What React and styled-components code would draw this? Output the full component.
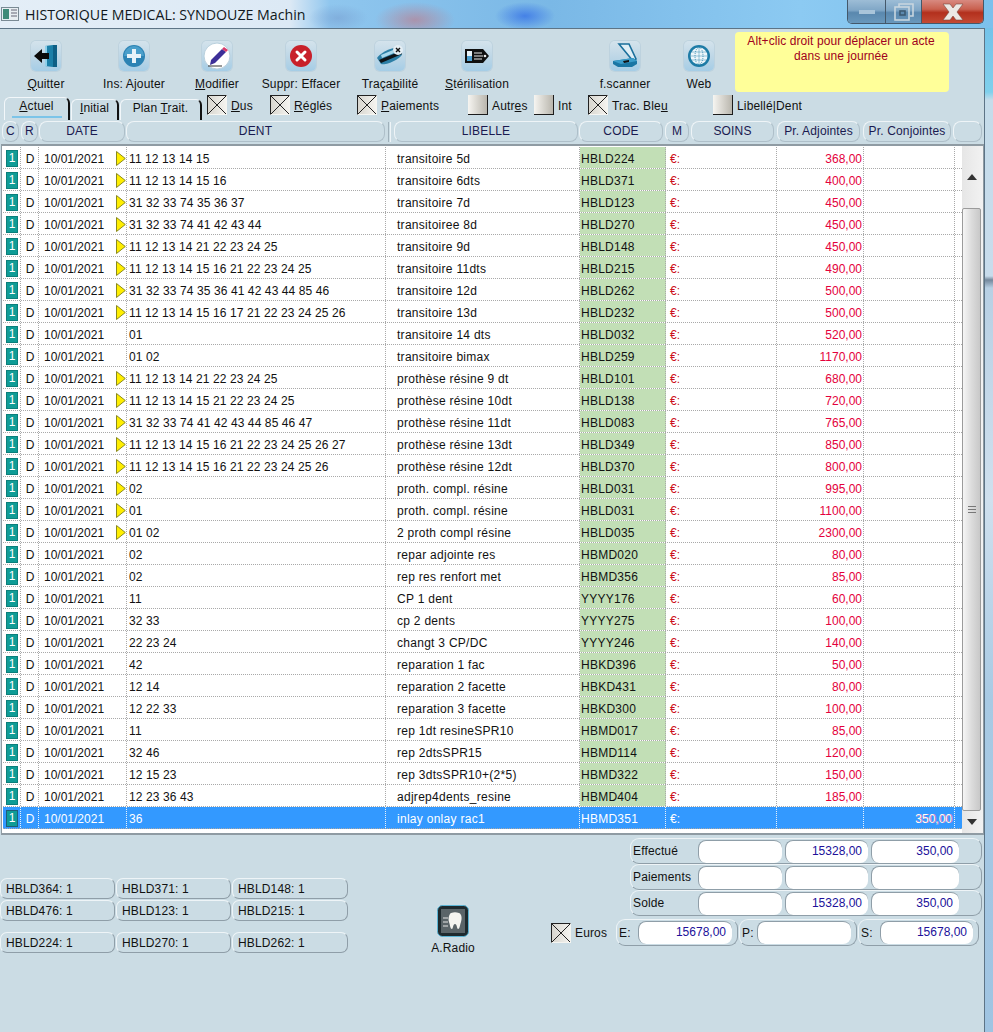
import React from "react";
import styled, { createGlobalStyle } from "styled-components";

const rows = [
  ["11 12 13 14 15", "transitoire 5d", "HBLD224", "368,00", 1],
  ["11 12 13 14 15 16", "transitoire 6dts", "HBLD371", "400,00", 1],
  ["31 32 33 74 35 36 37", "transitoire 7d", "HBLD123", "450,00", 1],
  ["31 32 33 74 41 42 43 44", "transitoiree 8d", "HBLD270", "450,00", 1],
  ["11 12 13 14 21 22 23 24 25", "transitoire 9d", "HBLD148", "450,00", 1],
  ["11 12 13 14 15 16 21 22 23 24 25", "transitoire 11dts", "HBLD215", "490,00", 1],
  ["31 32 33 74 35 36 41 42 43 44 85 46", "transitoire 12d", "HBLD262", "500,00", 1],
  ["11 12 13 14 15 16 17 21 22 23 24 25 26", "transitoire 13d", "HBLD232", "500,00", 1],
  ["01", "transitoire 14 dts", "HBLD032", "520,00", 0],
  ["01 02", "transitoire bimax", "HBLD259", "1170,00", 0],
  ["11 12 13 14 21 22 23 24 25", "prothèse résine 9 dt", "HBLD101", "680,00", 1],
  ["11 12 13 14 15 21 22 23 24 25", "prothèse résine 10dt", "HBLD138", "720,00", 1],
  ["31 32 33 74 41 42 43 44 85 46 47", "prothèse résine 11dt", "HBLD083", "765,00", 1],
  ["11 12 13 14 15 16 21 22 23 24 25 26 27", "prothèse résine 13dt", "HBLD349", "850,00", 1],
  ["11 12 13 14 15 16 21 22 23 24 25 26", "prothèse résine 12dt", "HBLD370", "800,00", 1],
  ["02", "proth. compl. résine", "HBLD031", "995,00", 1],
  ["01", "proth. compl. résine", "HBLD031", "1100,00", 1],
  ["01 02", "2 proth compl résine", "HBLD035", "2300,00", 1],
  ["02", "repar adjointe res", "HBMD020", "80,00", 0],
  ["02", "rep res renfort met", "HBMD356", "85,00", 0],
  ["11", "CP 1 dent", "YYYY176", "60,00", 0],
  ["32 33", "cp 2 dents", "YYYY275", "100,00", 0],
  ["22 23 24", "changt 3 CP/DC", "YYYY246", "140,00", 0],
  ["42", "reparation 1 fac", "HBKD396", "50,00", 0],
  ["12 14", "reparation 2 facette", "HBKD431", "80,00", 0],
  ["12 22 33", "reparation 3 facette", "HBKD300", "100,00", 0],
  ["11", "rep 1dt resineSPR10", "HBMD017", "85,00", 0],
  ["32 46", "rep 2dtsSPR15", "HBMD114", "120,00", 0],
  ["12 15 23", "rep 3dtsSPR10+(2*5)", "HBMD322", "150,00", 0],
  ["12 23 36 43", "adjrep4dents_resine", "HBMD404", "185,00", 0],
];

const Global = createGlobalStyle`
  html, body { margin: 0; padding: 0; background: #cbdce4; }
  body { font-family: "Liberation Sans", Arial, sans-serif; font-size: 12px; letter-spacing: 0.15px; color: #111; }
  * { box-sizing: border-box; }
  u { text-underline-offset: 1px; }
`;

const Screen = styled.div`
  width: 993px;
  height: 1032px;
  overflow: hidden;
  display: flex;
  flex-direction: column;
  background: linear-gradient(
    to bottom,
    #6fbde8 0,
    #7fd0ec 92px,
    #c5dcea 100px,
    #c8dcec 276px,
    #74889c 280px,
    #b8d0e4 288px,
    #cfe0ee 500px,
    #a8cae4 700px,
    #9fc4e2 100%
  );
`;

const TitleBar = styled.div`
  height: 28px;
  flex: none;
  display: flex;
  align-items: flex-start;
  background:
    radial-gradient(ellipse 40px 18px at 415px 20px, rgba(200, 110, 120, 0.55), transparent),
    radial-gradient(ellipse 30px 14px at 525px 16px, rgba(50, 110, 230, 0.75), transparent),
    radial-gradient(ellipse 30px 14px at 338px 18px, rgba(120, 160, 210, 0.6), transparent),
    linear-gradient(to right, #e4eef7 0, #dce9f5 290px, #8fc6ee 330px, #7ab8e6 550px, #8ccaf2 800px, #7cc0ec 100%);
`;

const AppGlyph = styled.svg`
  width: 18px;
  height: 16px;
  margin: 6px 0 0 1px;
  flex: none;
`;

const Title = styled.div`
  margin: 5px 0 0 6px;
  font-family: "Open Sans", sans-serif;
  font-size: 14.2px;
  line-height: 20px;
  letter-spacing: 0;
  color: #101820;
  white-space: nowrap;
  flex: 1;
`;

const WinButtons = styled.div`
  width: 137px;
  height: 24px;
  margin-right: 9px;
  display: flex;
  border: 1px solid #44586a;
  border-top: none;
  border-radius: 0 0 5px 5px;
  overflow: hidden;
  flex: none;
`;

const WinButton = styled.div`
  width: ${(p) => p.$w}px;
  display: flex;
  align-items: center;
  justify-content: center;
  border-right: ${(p) => (p.$last ? "none" : "1px solid #44586a")};
  background: ${(p) =>
    p.$close
      ? "linear-gradient(to bottom, #d88a80 0, #c9604f 40%, #b3301d 55%, #c44a34 100%)"
      : "linear-gradient(to bottom, #9dbdd6 0, #7fa6c6 45%, #5a88ae 55%, #6998bc 100%)"};
`;

const Panel = styled.div`
  width: 985px;
  flex: 1;
  display: flex;
  flex-direction: column;
  background: #cbdce4;
  border-top: 1px solid #5d7486;
  border-right: 1px solid #5d7486;
`;

const Toolbar = styled.div`
  height: 68px;
  flex: none;
  display: flex;
`;

const Tool = styled.div`
  width: ${(p) => p.$w}px;
  margin-left: ${(p) => p.$gap || 0}px;
  flex: none;
  display: flex;
  flex-direction: column;
  align-items: center;
  padding-top: 12px;
`;

const ToolIcon = styled.div`
  width: 30px;
  height: 30px;
  border-radius: 5px;
  background: linear-gradient(to bottom, #d4e3ec 0, #bcd6e6 55%, #a5cde6 100%);
  box-shadow: 0 0 0 1px #bdd2de;
  display: flex;
  align-items: center;
  justify-content: center;
`;

const ToolLabel = styled.div`
  margin-top: 6px;
  line-height: 14px;
  white-space: nowrap;
`;

const Note = styled.div`
  width: 214px;
  height: 60px;
  margin: 3px 0 0 3px;
  padding: 2px 2px 0 0;
  border-radius: 4px;
  background: #ffff99;
  color: #a00020;
  text-align: center;
  line-height: 15px;
  letter-spacing: 0.08px;
  flex: none;
`;

const TabRow = styled.div`
  height: 24px;
  flex: none;
  display: flex;
  align-items: flex-start;
  padding-left: 4px;
`;

const Tab = styled.div`
  width: ${(p) => p.$w}px;
  height: ${(p) => (p.$active ? 23 : 21)}px;
  margin: ${(p) => (p.$active ? 0 : 2)}px 1px 0 0;
  flex: none;
  text-align: center;
  line-height: 17px;
  border-top: 1px solid #f2f7fa;
  border-left: 1px solid #f2f7fa;
  border-right: 2px solid #111;
  border-radius: 6px 6px 0 0;
  ${(p) =>
    p.$active &&
    `&::after {
      content: "";
      display: block;
      width: 50px;
      height: 2px;
      margin: 1px auto 0;
      background: #7cc4e8;
    }`}
`;

const Checks = styled.div`
  display: flex;
  margin-top: -2px;
  margin-left: 4px;
`;

const CheckItem = styled.div`
  width: ${(p) => p.$w}px;
  flex: none;
  display: flex;
  align-items: center;
  gap: 4px;
  white-space: nowrap;
`;

const CheckLabel = styled.span`
  margin-top: 1px;
`;

const Box = styled.div`
  width: 20px;
  height: 20px;
  flex: none;
  border-right: 1px solid #1c1c1c;
  border-bottom: 1px solid #1c1c1c;
  background: ${(p) =>
    p.$checked
      ? `linear-gradient(to top right, transparent calc(50% - 0.7px), #222 50%, transparent calc(50% + 0.7px)),
         linear-gradient(to bottom right, transparent calc(50% - 0.7px), #222 50%, transparent calc(50% + 0.7px)),
         linear-gradient(to right, #d8d6cf, #f4f3ef)`
      : "linear-gradient(to right, #f6f5f1, #b9b6ad)"};
  ${(p) => p.$checked && "border: 1px solid #222; border-right-color: #f4f4f0; border-bottom-color: #f4f4f0;"}
`;

const HeaderRow = styled.div`
  height: 22px;
  flex: none;
  display: flex;
  padding-left: 2px;
`;

const HeadCell = styled.div`
  width: ${(p) => p.$w}px;
  margin-right: ${(p) => p.$gap ?? 1}px;
  flex: none;
  height: 21px;
  border: 1px solid #eef4f7;
  border-bottom-color: #aebfc9;
  border-right-color: #aebfc9;
  border-radius: 8px;
  text-align: center;
  line-height: 19px;
  color: #1a1a50;
  white-space: nowrap;
  overflow: hidden;
`;

const HeadSplit = styled.div`
  width: 3px;
  height: 20px;
  margin: 1px 3px 0 3px;
  flex: none;
  border-left: 1px solid #9fb0ba;
  border-right: 1px solid #eef4f7;
`;

const TableFrame = styled.div`
  height: 691px;
  margin: 1px 0 0 1px;
  flex: none;
  width: 983px;
  display: flex;
  background: #fff;
  border: 1px solid #8f9ba3;
  border-width: 2px 1px 2px 1px;
`;

const TableBody = styled.div`
  width: 960px;
  flex: none;
  padding-top: 1px;
`;

const Row = styled.div`
  display: grid;
  grid-template-columns: 18px 18px 88px 259px 194px 86px 111px 87px 91px 6px;
  height: 22px;
  line-height: 24px;
  margin-left: 1px;
  background: ${(p) => (p.$selected ? "#3399ff" : "#fff")};
  color: ${(p) => (p.$selected ? "#fff" : "#111")};
  border-bottom: 1px dotted #a9a9a9;
`;

const Cell = styled.div`
  border-right: 1px dotted ${(p) => (p.$selected ? "#e8f2fb" : "#a9a9a9")};
  padding: 0 0 0 ${(p) => p.$pad ?? 2}px;
  letter-spacing: ${(p) => p.$track ?? 0}px;
  white-space: nowrap;
  overflow: hidden;
`;

const StatusCell = styled(Cell)`
  padding: 3px 0 0 3px;
`;

const Status = styled.div`
  width: 12px;
  height: 17px;
  background: #0f9c96;
  color: #fff;
  border: 1px solid ${(p) => (p.$selected ? "#1c5f78" : "#0b7f7b")};
  text-align: center;
  line-height: 15px;
`;

const CenterCell = styled(Cell)`
  text-align: center;
  padding: 0 0 0 1px;
`;

const DateCell = styled(Cell)`
  display: flex;
  align-items: center;
  justify-content: space-between;
  padding: 2px 0 0 5px;
`;

const CodeCell = styled(Cell)`
  padding: 0 0 0 1px;
  letter-spacing: 0.25px;
  background: ${(p) => (p.$selected ? "transparent" : "#c2dfb6")};
`;

const Euro = styled(Cell)`
  padding: 0 0 0 4px;
  color: ${(p) => (p.$selected ? "#fff" : "#cc1020")};
`;

const Amount = styled(Cell)`
  text-align: right;
  padding: 0 ${(p) => p.$right}px 0 0;
  color: ${(p) => (p.$selected ? "#fff" : "#e4003c")};
  ${(p) => p.$selected && "text-shadow: 1px 0 0 #d070b0;"}
`;

const Filler = styled.div``;

const Scrollbar = styled.div`
  flex: 1;
  display: flex;
  flex-direction: column;
  background: linear-gradient(to right, #e6e6e6, #f2f2f2);
`;

const ScrollArrow = styled.div`
  height: ${(p) => p.$h}px;
  width: 19px;
  flex: none;
  display: flex;
  align-items: center;
  justify-content: center;
`;

const Thumb = styled.div`
  width: 19px;
  height: 603px;
  flex: none;
  border: 1px solid #9b9b9b;
  border-radius: 2px;
  background: linear-gradient(to right, #f6f6f6, #dcdcdc 50%, #c8c8c8);
  display: flex;
  align-items: center;
  justify-content: center;
`;

const Grip = styled.div`
  width: 8px;
  height: 7px;
  border-top: 1px solid #777;
  border-bottom: 1px solid #777;
  background: linear-gradient(#777, #777) center / 100% 1px no-repeat;
`;

const Bottom = styled.div`
  flex: 1;
  display: flex;
`;

const Codes = styled.div`
  width: 350px;
  flex: none;
  margin-top: 43px;
  display: grid;
  grid-template-columns: 115px 115px 116px;
  grid-template-rows: 21px 21px 21px;
  row-gap: 1px;
  column-gap: 1px;
  align-content: start;
`;

const CodePill = styled.div`
  height: 21px;
  border: 1px solid #eef4f7;
  border-bottom-color: #8f9ea8;
  border-right-color: #8f9ea8;
  border-radius: 7px;
  padding-left: 5px;
  line-height: 20px;
  ${(p) => p.$drop && "margin-top: 10px;"}
`;

const Radio = styled.div`
  width: 80px;
  margin: 70px 0 0 63px;
  flex: none;
  display: flex;
  flex-direction: column;
  align-items: center;
`;

const RadioLabel = styled.div`
  margin-top: 4px;
  line-height: 14px;
`;

const Totals = styled.div`
  margin-left: 58px;
  flex: 1;
  padding-top: 3px;
  display: flex;
  flex-direction: column;
  align-items: flex-end;
`;

const TotalRow = styled.div`
  width: 352px;
  height: 26px;
  flex: none;
  margin-right: 2px;
  display: flex;
  align-items: center;
  padding-left: 2px;
  border: 1px solid #eef4f7;
  border-bottom-color: #8f9ea8;
  border-right-color: #8f9ea8;
  border-radius: 9px;
`;

const TotalLabel = styled.div`
  width: 65px;
  flex: none;
`;

const Input = styled.div`
  width: ${(p) => p.$w}px;
  height: 23px;
  margin-right: ${(p) => p.$gap ?? 2}px;
  flex: none;
  background: #fff;
  border-radius: 8px;
  border-top: 1px solid #8f9ea8;
  border-left: 1px solid #8f9ea8;
  text-align: right;
  padding-right: 6px;
  line-height: 21px;
  letter-spacing: 0;
  color: #20109a;
`;

const EuroRow = styled.div`
  display: flex;
  align-items: center;
  margin-top: 3px;
  width: 100%;
`;

const EuroCheck = styled.div`
  display: flex;
  align-items: center;
  gap: 4px;
  width: 65px;
  flex: none;
`;

const EuroField = styled.div`
  width: ${(p) => p.$w}px;
  height: 27px;
  margin-right: 1px;
  flex: none;
  display: flex;
  align-items: center;
  justify-content: space-between;
  padding: 0 5px 0 2px;
  border: 1px solid #eef4f7;
  border-bottom-color: #8f9ea8;
  border-right-color: #8f9ea8;
  border-radius: 9px;
`;

const icons = {
  quitter: (
    <svg width="26" height="26" viewBox="0 0 26 26">
      <path d="M12 3l8-1v22l-8-1z" fill="#1b7fa8" />
      <path d="M20 2h4v22h-4z" fill="#0d5f86" />
      <path d="M12 3h2v20h-2z" fill="#8fd0ea" />
      <path d="M1 13l8-7v4h7v6h-7v4z" fill="#0a0a0a" />
    </svg>
  ),
  ajouter: (
    <svg width="24" height="24" viewBox="0 0 24 24">
      <circle cx="12" cy="12" r="11" fill="#2c83b4" />
      <path d="M2 12a10 10 0 0 1 20 0z" fill="#4a9fcb" />
      <path d="M10 5h4v5h5v4h-5v5h-4v-5h-5v-4h5z" fill="#e8f3f9" />
    </svg>
  ),
  modifier: (
    <svg width="28" height="28" viewBox="0 0 28 28">
      <circle cx="14" cy="14" r="13" fill="#fff" stroke="#b9d0dd" />
      <path d="M8 18l11-11 4 3-11 11-5 2z" fill="#3d2f98" />
      <path d="M19 7l2-2 4 3-2 2z" fill="#d83a6a" />
      <path d="M5 24h14" stroke="#333" strokeWidth="1" />
    </svg>
  ),
  effacer: (
    <svg width="24" height="24" viewBox="0 0 24 24">
      <circle cx="12" cy="12" r="11" fill="#c8202a" />
      <path d="M8 8l8 8M16 8l-8 8" stroke="#fff" strokeWidth="3" strokeLinecap="round" />
    </svg>
  ),
  traca: (
    <svg width="28" height="24" viewBox="0 0 28 24">
      <path d="M1 14C3 9 18 2 22 4l4 6C26 14 10 22 5 20z" fill="#2c7fa6" />
      <path d="M3 16L25 7l1 3L5 19z" fill="#101418" />
      <path d="M5 11l12-5 1 3-12 5z" fill="#a8d8ec" />
      <circle cx="22" cy="6" r="5" fill="#e4eef4" />
      <path d="M20 4l4 4M24 4l-4 4" stroke="#111" strokeWidth="1.4" />
    </svg>
  ),
  steril: (
    <svg width="26" height="20" viewBox="0 0 26 20">
      <path d="M1 3h18l6 7-6 7H1z" fill="#101010" />
      <path d="M3 5h5v10H3z" fill="#e8f2f8" />
      <path d="M3 10h5v5H3z" fill="#4d9fd0" />
      <path d="M10 7h8M10 10h9M10 13h8" stroke="#e8e8e8" strokeWidth="1.2" />
      <circle cx="21" cy="10" r="1.3" fill="#eee" />
    </svg>
  ),
  scanner: (
    <svg width="28" height="28" viewBox="0 0 28 28">
      <path d="M8 2h10l7 15-3 2z" fill="#dfeef6" stroke="#1a6f9c" strokeWidth="1.6" />
      <path d="M2 19l20-3 4 3v3l-5 3H7l-5-3z" fill="#1a76a4" />
      <path d="M2 19l20-3 4 3-16 3z" fill="#3b9dca" />
      <path d="M12 19l6-1v2l-5 1z" fill="#111" />
    </svg>
  ),
  web: (
    <svg width="24" height="24" viewBox="0 0 24 24">
      <circle cx="12" cy="12" r="11" fill="#1d7ba6" />
      <circle cx="12" cy="12" r="8.5" fill="#eef6fa" />
      <g stroke="#2a84ad" strokeWidth="0.9" fill="none" strokeDasharray="1 1">
        <ellipse cx="12" cy="12" rx="4" ry="8.5" />
        <path d="M12 3.500v17M3.500 12h17M4.500 8h15M4.500 16h15" />
      </g>
    </svg>
  ),
};

const Triangle = () => (
  <svg width="10" height="15" viewBox="0 0 10 15" style={{ flex: "none" }}>
    <path d="M.5.5L9.3 7.5.5 14.5z" fill="#ffee00" stroke="#8a8a20" />
  </svg>
);

const tools = [
  { w: 92, icon: "quitter", label: <><u>Q</u>uitter</> },
  { w: 84, icon: "ajouter", label: "Ins: Ajouter" },
  { w: 82, icon: "modifier", label: <><u>M</u>odifier</> },
  { w: 86, icon: "effacer", label: "Suppr: Effacer" },
  { w: 92, icon: "traca", label: <>Traça<u>b</u>ilité</> },
  { w: 82, icon: "steril", label: <><u>S</u>térilisation</> },
  { w: 82, gap: 66, icon: "scanner", label: "f.scanner" },
  { w: 66, icon: "web", label: "Web" },
];

const checks = [
  { w: 63, on: 1, label: <><u>D</u>us</> },
  { w: 87, on: 1, label: <><u>R</u>églés</> },
  { w: 111, on: 1, label: <><u>P</u>aiements</> },
  { w: 66, label: <>Autr<u>e</u>s</> },
  { w: 54, label: "Int" },
  { w: 125, on: 1, label: <>Trac. Ble<u>u</u></> },
  { w: 100, label: "Libellé|Dent" },
];

const heads = [
  ["C", 17, 2], ["R", 17, 1], ["DATE", 86], ["DENT", 259, 0], ["LIBELLE", 184], ["CODE", 84, 2],
  ["M", 24, 2], ["SOINS", 83, 3], ["Pr. Adjointes", 83, 3], ["Pr. Conjointes", 88, 2], ["", 29],
];

const codePills = [
  "HBLD364: 1", "HBLD371: 1", "HBLD148: 1",
  "HBLD476: 1", "HBLD123: 1", "HBLD215: 1",
  "HBLD224: 1", "HBLD270: 1", "HBLD262: 1",
];

const totals = [
  ["Effectué", "15328,00", "350,00"],
  ["Paiements", "", ""],
  ["Solde", "15328,00", "350,00"],
];

const TableRow = ({ dent, label, code, price, tri, conj, selected }) => (
  <Row $selected={selected}>
    <StatusCell $selected={selected}><Status $selected={selected}>1</Status></StatusCell>
    <CenterCell $selected={selected}>D</CenterCell>
    <DateCell $selected={selected}>10/01/2021{tri ? <Triangle /> : null}</DateCell>
    <Cell $selected={selected} $track={0.1}>{dent}</Cell>
    <Cell $selected={selected} $pad={11} $track={0.28}>{label}</Cell>
    <CodeCell $selected={selected}>{code}</CodeCell>
    <Euro $selected={selected}>€:</Euro>
    <Amount $selected={selected} $right={1}>{price}</Amount>
    <Amount $selected={selected} $right={2}>{conj}</Amount>
    <Filler />
  </Row>
);

export default function App() {
  return (
    <Screen>
      <Global />
      <TitleBar>
        <AppGlyph viewBox="0 0 18 16">
          <rect x="0.5" y="1.5" width="17" height="13" fill="#e8eef2" stroke="#7a8a94" />
          <rect x="2" y="3" width="6" height="10" fill="#3f8a78" />
          <path d="M10 4h6M10 7h6M10 10h6" stroke="#667" />
        </AppGlyph>
        <Title>HISTORIQUE MEDICAL: SYNDOUZE Machin</Title>
        <WinButtons>
          <WinButton $w={38}>
            <svg width="18" height="6"><rect x="1" y="1" width="16" height="4" fill="#a9c5da" /></svg>
          </WinButton>
          <WinButton $w={36}>
            <svg width="20" height="18" fill="none" stroke="#c9d6df" strokeWidth="1.6">
              <path d="M5 4V1h14v12h-3" />
              <rect x="1" y="4" width="14" height="13" />
              <rect x="6" y="8" width="5" height="4" stroke="#3c5a72" />
            </svg>
          </WinButton>
          <WinButton $w={61} $close $last>
            <svg width="24" height="18" viewBox="0 0 24 18">
              <path d="M2 1h7l3 4 3-4h7l-6 8 6 8h-7l-3-4-3 4H2l6-8z" fill="#ece9e4" stroke="#7a4a40" strokeWidth="0.6" />
            </svg>
          </WinButton>
        </WinButtons>
      </TitleBar>
      <Panel>
        <Toolbar>
          {tools.map((t) => (
            <Tool key={t.icon} $w={t.w} $gap={t.gap}>
              <ToolIcon>{icons[t.icon]}</ToolIcon>
              <ToolLabel>{t.label}</ToolLabel>
            </Tool>
          ))}
          <Note>Alt+clic droit pour déplacer un acte<br />dans une journée</Note>
        </Toolbar>
        <TabRow>
          <Tab $w={66} $active><u>A</u>ctuel</Tab>
          <Tab $w={48}><u>I</u>nitial</Tab>
          <Tab $w={82}>Plan <u>T</u>rait.</Tab>
          <Checks>
            {checks.map((c, i) => (
              <CheckItem key={i} $w={c.w}>
                <Box $checked={c.on} />
                <CheckLabel>{c.label}</CheckLabel>
              </CheckItem>
            ))}
          </Checks>
        </TabRow>
        <HeaderRow>
          {heads.map(([name, w, gap]) => (
            <React.Fragment key={name}>
              <HeadCell $w={w} $gap={gap}>{name}</HeadCell>
              {name === "DENT" ? <HeadSplit /> : null}
            </React.Fragment>
          ))}
        </HeaderRow>
        <TableFrame>
          <TableBody>
            {rows.map((r, i) => (
              <TableRow key={i} dent={r[0]} label={r[1]} code={r[2]} price={r[3]} tri={r[4]} />
            ))}
            <TableRow selected dent="36" label="inlay onlay rac1" code="HBMD351" conj="350,00" />
          </TableBody>
          <Scrollbar>
            <ScrollArrow $h={62}>
              <svg width="10" height="6"><path d="M0 6L5 0l5 6z" fill="#333" /></svg>
            </ScrollArrow>
            <Thumb><Grip /></Thumb>
            <ScrollArrow $h={22}>
              <svg width="10" height="6"><path d="M0 0l5 6 5-6z" fill="#333" /></svg>
            </ScrollArrow>
          </Scrollbar>
        </TableFrame>
        <Bottom>
          <Codes>
            {codePills.map((c, i) => (
              <CodePill key={c} $drop={i > 5}>{c}</CodePill>
            ))}
          </Codes>
          <Radio>
            <svg width="32" height="32" viewBox="0 0 32 32">
              <rect x="0.500" y="0.500" width="31" height="31" rx="5" fill="#1e2a2e" stroke="#5ab4d4" />
              <rect x="4" y="4" width="24" height="24" fill="#5a6468" />
              <path d="M14 8c3-1 5-1 8 0 3 1 3 6 2 9-1 2-1 7-3 7-1 0-1-5-3-5s-2 5-3 5c-2 0-2-5-3-7-1-3 0-8 2-9z" fill="#f4f4f0" />
              <path d="M6 13h5M6 17h5M6 21h5" stroke="#e4e4e4" />
            </svg>
            <RadioLabel>A.Radio</RadioLabel>
          </Radio>
          <Totals>
            {totals.map(([name, a, b]) => (
              <TotalRow key={name}>
                <TotalLabel>{name}</TotalLabel>
                <Input $w={84} $gap={3} />
                <Input $w={83} $gap={3}>{a}</Input>
                <Input $w={88}>{b}</Input>
              </TotalRow>
            ))}
            <EuroRow>
              <EuroCheck>
                <Box $checked />
                Euros
              </EuroCheck>
              <EuroField $w={122}>E:<Input $w={94} $gap={0}>15678,00</Input></EuroField>
              <EuroField $w={118}>P:<Input $w={94} $gap={0} /></EuroField>
              <EuroField $w={121}>S:<Input $w={93} $gap={0}>15678,00</Input></EuroField>
            </EuroRow>
          </Totals>
        </Bottom>
      </Panel>
    </Screen>
  );
}
